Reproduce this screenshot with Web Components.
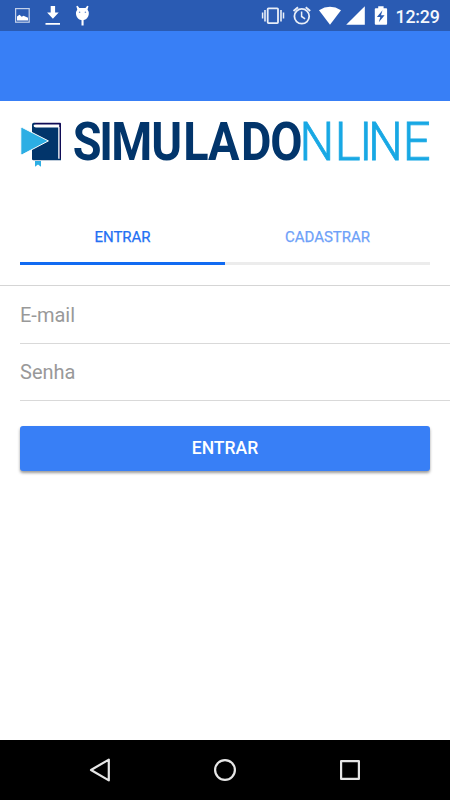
<!DOCTYPE html>
<html lang="pt-BR">
<head>
<meta charset="utf-8">
<title>Simulado Online</title>
<style>
html,body{margin:0;height:100%;background:#fff;font-family:Roboto,"Liberation Sans",sans-serif}
</style>
</head>
<body>
<login-screen></login-screen>
<script>
const define = (name, html) => customElements.define(name, class extends HTMLElement {
  constructor() {
    super();
    const t = document.createElement('template');
    t.innerHTML = html;
    this.attachShadow({mode: 'open'}).append(t.content.cloneNode(true));
  }
});

define('status-bar', `
<style>
:host{display:flex;align-items:center;height:31px;background:#2a5bb3;color:#fff;box-sizing:border-box;flex:none}
svg{display:block;width:392px;height:31px;flex:none}
span{font-size:17.800px;font-weight:500;line-height:31px;margin:1px 0 0 3.500px;white-space:nowrap;letter-spacing:-.2px;color:#f4f7fc}
</style>
<svg viewBox="0 0 392 31" fill="#fff">
  <rect x="15.600" y="8.600" width="13.600" height="13.600" fill="none" stroke="#c3d1ea" stroke-width="1.200"/>
  <path d="M17 20.500v-4l2.500-1.700 2.200 2 1.800-1 4.500 2v2.700z"/>
  <path d="M50.700 6h4.400v6.500h3.600l-5.800 6.200-5.800-6.200h3.600zM45.500 23h14.500v1.800h-14.500z"/>
  <path d="M76.300 6.300l1.300-.6 1.700 2.200h6.200l1.700-2.200 1.300.6-1 3.200q1.500 2 1.300 4.500c-.4 3.500-3 6.200-6.400 6.200s-6-2.700-6.400-6.200q-.2-2.500 1.300-4.500z"/>
  <circle cx="79.600" cy="12.200" r=".8" fill="#6a8dcc"/><circle cx="85.400" cy="12.200" r=".8" fill="#6a8dcc"/>
  <path d="M81.500 20h2.100v5.500h-2.100z"/>
  <g fill="none" stroke="#e8eef8">
    <rect x="267.700" y="8.300" width="10.300" height="14.800" rx=".8" stroke-width="1.800"/>
    <path d="M265 10v11.500M281 10v11.500" stroke-width="1.600"/><path d="M262.600 12.500v6M283.500 12.500v6" stroke-width="1.500"/>
    <circle cx="301.800" cy="16.300" r="7.400" stroke-width="1.800"/>
    <path d="M301.600 11.500v5l3.500 2.300" stroke-width="1.500"/>
    <path d="M293.500 11l4.500-3.800M310.200 11l-4.500-3.800" stroke-width="1.900"/>
  </g>
  <path d="M319 10.200q11-6.800 22 0l-11 14.600z"/>
  <path d="M346.200 24.800h18.600v-18.500z"/>
  <path d="M378.200 6.300h5.400v1.900h2.600q.9 0 .9.900v14.700q0 1-1 1h-10.300q-1 0-1-1v-14.700q0-.9.900-.9h2.500z"/>
  <path d="M382.500 10.200l-5.600 6.900h3.400l-1.500 5.200 5.800-7h-3.600z" fill="#2a5bb3"/>
</svg>
<span>12:29</span>`);

define('app-toolbar', `<style>:host{display:block;height:70px;background:#387ff6;flex:none}</style>`);

define('brand-logo', `
<style>
:host{display:block;height:50px;margin:19px 20px 0;flex:none}
svg{display:block;width:410px;height:50px;overflow:visible}
text{font-family:Roboto,"Liberation Sans",sans-serif;font-size:53.200px;text-anchor:middle}
</style>
<svg viewBox="20 120 410 50">
  <path d="M33.800 123.700h26.300v35.600" fill="none" stroke="#100c56" stroke-width="1.800" stroke-linejoin="round"/>
  <path d="M34 122.800q-2 0-2 2v34.200q0 1.300 1.500 1.300h27.500v-1.800h-2.600v-31h-22.400q-2.400 0-2.400-1.800t2.400-1.700z" fill="#02356b"/>
  <path d="M59 127v31.800" stroke="#fff" stroke-width=".9"/>
  <path d="M20.800 128.600q0-1.800 1.600-1l26 13.300-26 13.700q-1.600.8-1.600-1z" fill="#2caee4" stroke="#fff" stroke-width="1"/>
  <path d="M35 161h6v5.800l-3-2.400-3 2.400z" fill="#2caee4"/>
  <g transform="scale(.88 1)">
    <text y="160.500" font-weight="700" fill="#02356b" x="99.100 120.600 149.800 189.300 222.500 254.200 291.200 325.500">SIMULADO</text>
  </g>
  <g transform="scale(.92 1)">
    <text y="160.400" font-weight="300" fill="#18a8e4" stroke="#18a8e4" stroke-width=".8" x="344.500 378 397.500 419 453">NLINE</text>
  </g>
</svg>`);

define('tab-item', `
<style>
:host{flex:1;display:flex;justify-content:center;box-sizing:border-box;height:47px;padding-top:10px;border-bottom:3px solid #ececec;font-size:15px;font-weight:400;-webkit-text-stroke:.25px currentColor;line-height:19px;color:#6ea1f8}
:host([selected]){color:#2370f3;border-color:#116bf2}
</style><slot></slot>`);

define('tab-strip', `<style>:host{display:flex;margin:48px 20px 0;flex:none}</style><slot></slot>`);

define('form-field', `
<style>
:host{display:block;box-sizing:border-box;height:58px;margin-left:20px;padding-top:17px;border-bottom:1px solid #d9d9d9;color:#999;font-size:20px;line-height:24px;flex:none}
:host([last]){height:57px;padding-top:16px}
</style><slot></slot>`);

define('field-list', `<style>:host{display:block;margin-top:20px;border-top:1px solid #d5d5d5;flex:none}</style><slot></slot>`);

define('primary-button', `
<style>
:host{display:block;flex:none;margin:25px 20px 0}
button{display:block;width:100%;height:45px;padding:0;border:0;border-radius:3px;background:#387ff6;color:#fff;font:500 17.500px/43px Roboto,"Liberation Sans",sans-serif;box-shadow:0 2px 3px rgba(0,0,0,.4)}
</style><button><slot></slot></button>`);

define('navigation-bar', `
<style>
:host{display:block;height:60px;background:#000;margin-top:auto;flex:none}
svg{display:block;width:100%;height:60px}
</style>
<svg viewBox="0 0 450 60" fill="none" stroke="#e6e6e6" stroke-width="2.200" stroke-linejoin="round">
  <path d="M91 30l17.800-10.400v20.800z"/><circle cx="225" cy="30" r="9.900"/><rect x="341.100" y="21.100" width="17.800" height="17.800"/>
</svg>`);

define('login-screen', `
<style>:host{display:flex;flex-direction:column;width:450px;height:800px;background:#fff;overflow:hidden}</style>
<status-bar></status-bar>
<app-toolbar></app-toolbar>
<brand-logo></brand-logo>
<tab-strip><tab-item selected>ENTRAR</tab-item><tab-item>CADASTRAR</tab-item></tab-strip>
<field-list><form-field>E-mail</form-field><form-field last>Senha</form-field></field-list>
<primary-button>ENTRAR</primary-button>
<navigation-bar></navigation-bar>`);
</script>
</body>
</html>
